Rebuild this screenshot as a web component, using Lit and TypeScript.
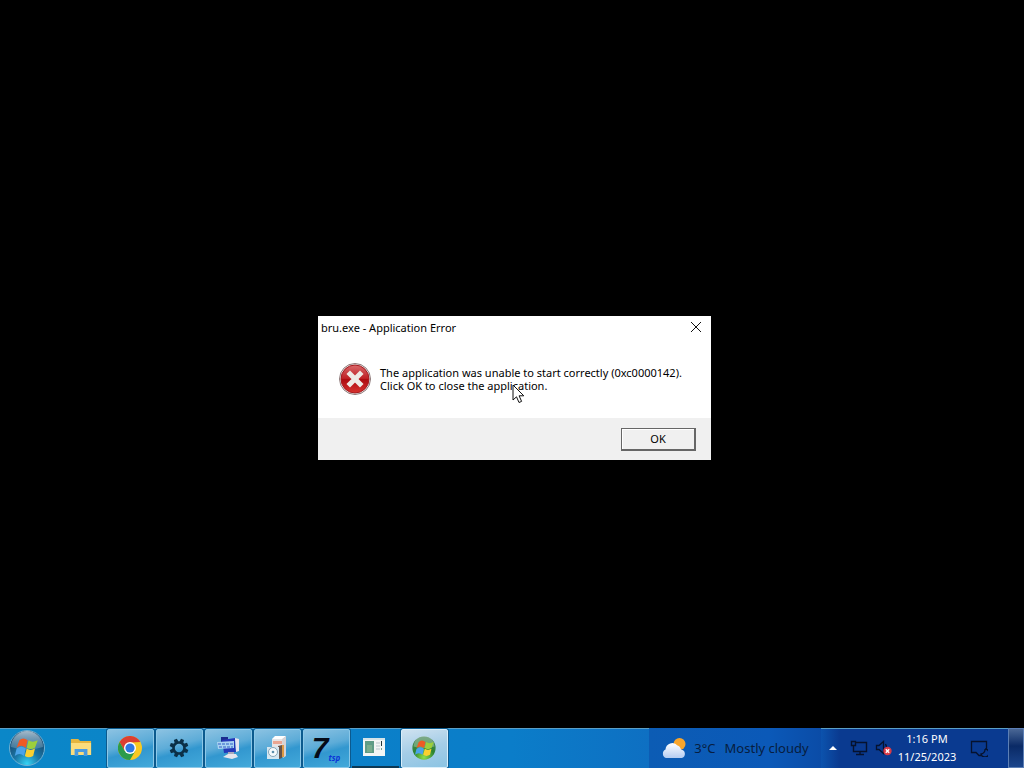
import { LitElement, html, css, svg } from 'lit';
import { customElement, state } from 'lit/decorators.js';
import { classMap } from 'lit/directives/class-map.js';

const flag = svg`
  <path d="M8 9 Q12 5 17 9 L15 17 Q10 13 5 17Z" fill="#ee5a24"/>
  <path d="M18 9 Q22 12 28 9 L25 17 Q20 20 16 17Z" fill="#9ccf3c"/>
  <path d="M5 18 Q10 14 15 18 L13 26 Q8 22 3 26Z" fill="#4ba3e8"/>
  <path d="M16 18 Q20 21 25 18 L23 26 Q18 29 14 26Z" fill="#fbd02f"/>`;

const startIcon = html`<svg width="38" height="38" viewBox="0 0 38 38" aria-hidden="true">
  <defs>
    <radialGradient id="orb" cx="50%" cy="95%" r="90%">
      <stop offset="0" stop-color="#35d3f4"/><stop offset=".4" stop-color="#1a78a8"/><stop offset="1" stop-color="#17395c"/>
    </radialGradient>
    <linearGradient id="gloss" x1="0" y1="0" x2="0" y2="1">
      <stop offset="0" stop-color="#d5e7f1" stop-opacity=".75"/><stop offset="1" stop-color="#8fb9d0" stop-opacity=".3"/>
    </linearGradient>
  </defs>
  <circle cx="19" cy="19" r="17.5" fill="url(#orb)" stroke="#6fb1d4"/>
  <path d="M3 18 A16 16 0 0 1 35 18 Q19 23 3 18Z" fill="url(#gloss)"/>
  <g transform="translate(4 3) scale(.92)">${flag}</g>
</svg>`;

const folderIcon = html`<svg width="22" height="20" viewBox="0 0 24 20" preserveAspectRatio="none" aria-hidden="true">
  <path d="M1 1h8l2 2h12v14H1z" fill="#e5b53f"/>
  <path d="M1 5h22v12H1z" fill="#fbdc7c"/>
  <path d="M5 11h14v7h-4v-4H9v4H5z" fill="#4a9be0"/>
</svg>`;

const chromeIcon = html`<svg width="24" height="24" viewBox="0 0 24 24" aria-hidden="true">
  <circle cx="12" cy="12" r="12" fill="#f9c921"/>
  <path d="M1.6 6 A12 12 0 0 1 22.4 6 L12 6.4 L6.8 15Z" fill="#dc3f31"/>
  <path d="M1.6 6 A12 12 0 0 0 12 24 L17.2 15 L6.8 15Z" fill="#2c9b4b"/>
  <circle cx="12" cy="12" r="6" fill="#fff"/>
  <circle cx="12" cy="12" r="4.6" fill="#2f78e4"/>
</svg>`;

const gearIcon = html`<svg width="20" height="20" viewBox="0 0 20 20" fill="none" aria-hidden="true">
  <circle cx="10" cy="10" r="5.5" stroke="#0b3047" stroke-width="2.6"/>
  ${[0, 45, 90, 135, 180, 225, 270, 315].map(a => svg`<path d="M7.9 4 L8.4 .6 H11.6 L12.1 4Z" fill="#0b3047" transform="rotate(${a + 22} 10 10)"/>`)}
</svg>`;

const monitorIcon = html`<svg width="24" height="24" viewBox="0 0 24 24" aria-hidden="true">
  <path d="M5 1 L12 1 V6 H5z" fill="#1a2c8e"/>
  <path d="M6 4 L19 2 L20 16 L8 17Z" fill="#2337b8"/>
  <path d="M19 2 L23 3 L23 15 L20 16Z" fill="#e6e4f0"/>
  <path d="M1 6 L18 5 V12 L2 13Z" fill="#a9d2f2"/>
  <path d="M2 8h15M3 11h14" stroke="#315fc5" stroke-width="1.2" stroke-dasharray="3 1"/>
  <path d="M12 16h6v4h-6z" fill="#aaa9ba"/>
  <path d="M7 21 L12 18 H20 L22 21 L16 23Z" fill="#e4e5ed"/>
</svg>`;

const installerIcon = html`<svg width="24" height="24" viewBox="0 0 24 24" aria-hidden="true">
  <path d="M7 3 L18 2 V21 L7 22Z" fill="#e7e4e5"/>
  <path d="M7 3 L10 0 H21 L18 3Z" fill="#fff"/>
  <path d="M17 3 L21 0 V20 L18 22Z" fill="#d8d2d4"/>
  <path d="M8 5h9v3H8z" fill="#eba692"/>
  <path d="M13 10 L17 9 V22 L14 23Z" fill="#65534c"/>
  <path d="M17 9h2v12h-2z" fill="#dc9a45"/>
  <path d="M2 11h12v12H2z" fill="#d5e6f0"/>
  <circle cx="8" cy="16" r="4.5" fill="#f6fafc" stroke="#87a6b8"/>
  <circle cx="8" cy="16" r="1.3" fill="#5c8fac"/>
</svg>`;

const windowIcon = html`<svg width="22" height="20" viewBox="0 0 22 20" aria-hidden="true">
  <path d="M0 1h22v18H0z" fill="#f3f6f5"/>
  <path d="M0 1h22v2H0z" fill="#d4e4e9"/>
  <path d="M2 4h9v12H2z" fill="#5f9c86"/>
  <path d="M4 8h5v7H4z" fill="#79ad8d"/>
  <path d="M13 6h4M13 9h4M13 12h4" stroke="#b9c7cb"/>
  <path d="M18 4h1v5h-1z" fill="#27363a"/>
  <path d="M18 11h1v2h-1z" fill="#7ca090"/>
</svg>`;

const greenOrbIcon = html`<svg width="24" height="24" viewBox="0 0 32 32" aria-hidden="true">
  <defs><radialGradient id="green" cx="50%" cy="90%" r="90%">
    <stop offset="0" stop-color="#8fe04a"/><stop offset=".5" stop-color="#2b8430"/><stop offset="1" stop-color="#4e8462"/>
  </radialGradient></defs>
  <circle cx="16" cy="16" r="15.5" fill="url(#green)"/>
  <path d="M2 14 A14 14 0 0 1 30 14 Q16 18 2 14Z" fill="#d4ecd5" opacity=".35"/>
  <g transform="translate(1 -1)">${flag}</g>
</svg>`;

const weatherIcon = html`<svg width="26" height="22" viewBox="0 0 26 22" aria-hidden="true">
  <defs><linearGradient id="cloud" x1="0" y1="0" x2="0" y2="1"><stop offset="0" stop-color="#fff"/><stop offset="1" stop-color="#b5cdf2"/></linearGradient></defs>
  <circle cx="18.5" cy="7" r="6" fill="#f9a52b"/>
  <path d="M5 21 A4.6 4.6 0 0 1 4.5 12.5 A6.8 6.8 0 0 1 16.5 8.5 Q19 9 20 12.5 A4.4 4.4 0 0 1 21 21Z" fill="url(#cloud)"/>
</svg>`;

const errorIcon = html`<svg width="32" height="32" viewBox="0 0 32 32" aria-hidden="true">
  <defs><linearGradient id="red" x1="0" y1="0" x2="0" y2="1"><stop offset="0" stop-color="#d9686a"/><stop offset=".48" stop-color="#bf2226"/><stop offset=".5" stop-color="#ac0b10"/><stop offset="1" stop-color="#d7332f"/></linearGradient></defs>
  <circle cx="16" cy="16" r="15.5" fill="#eee" stroke="#8d7777"/>
  <circle cx="16" cy="16" r="14" fill="url(#red)" stroke="#a51a1e"/>
  <path d="M11 11 L21 21 M21 11 L11 21" stroke="#eeebe6" stroke-width="5" stroke-linecap="square" />
</svg>`;

const pointer = html`<svg class="pointer" width="13" height="20" viewBox="0 0 13 20" aria-hidden="true">
  <path d="M1 1 V16 L4.5 12.8 L7 18.5 L9.6 17.4 L7.1 11.8 H11.8Z" fill="#fff" stroke="#111"/>
</svg>`;

interface Task { name: string; icon: unknown; kind: string; }

const tasks: Task[] = [
  { name: 'Google Chrome', icon: chromeIcon, kind: 'glass' },
  { name: 'Settings', icon: gearIcon, kind: 'glass' },
  { name: 'Remote display', icon: monitorIcon, kind: 'glass' },
  { name: 'Installer', icon: installerIcon, kind: 'glass' },
  { name: '7tsp', icon: html`<span class="seven">7</span><span class="tsp">tsp</span>`, kind: 'glass' },
  { name: 'Console window', icon: windowIcon, kind: 'plain' },
  { name: 'Application Error', icon: greenOrbIcon, kind: 'active' },
];

@customElement('error-dialog')
class ErrorDialog extends LitElement {
  static styles = css`
    :host { display: block; background: #fff; color: #000; font: 11px/13px "Noto Sans", sans-serif; }
    header { display: flex; justify-content: space-between; align-items: center; height: 24px; padding-left: 3px; line-height: 16px; }
    h1 { margin: 0; font: inherit; }
    button { font: inherit; color: inherit; }
    .close { display: grid; place-items: center; width: 31px; height: 24px; padding: 0 0 2px; border: 0; background: none; }
    .content { display: flex; align-items: center; gap: 9px; height: 78px; padding: 0 21px; }
    .content p { margin: 0; white-space: pre-line; }
    footer { display: flex; justify-content: flex-end; padding: 10px 15px 9px; background: #f0f0f0; }
    .ok { width: 75px; height: 23px; padding: 0 0 2px; background: #f0f0f0; border: 1px solid #666; border-width: 1px 2px 2px 1px; box-shadow: inset 1px 1px #fff; }
    svg { display: block; flex: none; }
  `;

  private dismiss() { this.dispatchEvent(new CustomEvent('dismiss')); }

  render() {
    return html`
      <header>
        <h1>bru.exe - Application Error</h1>
        <button class="close" aria-label="Close" @click=${this.dismiss}>
          <svg width="12" height="12" viewBox="0 0 12 12"><path d="M1 1 L11 11 M11 1 L1 11" stroke="#111" fill="none"/></svg>
        </button>
      </header>
      <div class="content">${errorIcon}<p>The application was unable to start correctly (0xc0000142).
Click OK to close the application.</p></div>
      <footer><button class="ok" @click=${this.dismiss}>OK</button></footer>`;
  }
}

@customElement('task-bar')
class TaskBar extends LitElement {
  static styles = css`
    :host { display: flex; height: 40px; box-shadow: inset 0 1px #5a9fc8; background: linear-gradient(90deg, #0b87c8 0%, #0b7dc9 50%, #0e6fc2 64%, #0c55b0 80%, #0a3a90 82%, #0a3a90 100%); font: 11px/18px "Noto Sans", sans-serif; color: #fff; }
    button { display: flex; align-items: center; justify-content: center; padding: 0; border: 0; background: none; font: inherit; color: inherit; }
    svg { display: block; flex: none; }
    .start { width: 54px; }
    .pinned { width: 53px; }
    .tasks { display: flex; gap: 2px; flex: 1; padding-top: 1px; }
    .task { width: 47px; box-sizing: border-box; padding: 0 1px 2px 0; }
    .glass { border: 1px solid #8cc8e8; border-radius: 2px; background: linear-gradient(165deg, #8bc2e2 0%, #5dacd8 42%, #3297cf 58%, #43a9da 100%); box-shadow: 0 0 0 1px #0c5a8e; }
    .plain { padding-right: 3px; border-bottom: 2px solid #0d3853; }
    .active { border: 1px solid #d9eefa; border-radius: 2px; background: linear-gradient(165deg, #cfe2f0 0%, #a5cde7 50%, #8cc4e3 100%); box-shadow: 0 0 0 1px #0c5a8e; }
    .seven { color: #050b18; font: italic bold 30px/30px "Liberation Sans", sans-serif; }
    .tsp { align-self: flex-end; color: #0a35d8; font: italic bold 8px/14px "Open Sans", sans-serif; }
    .weather { gap: 7px; width: 172px; background: linear-gradient(90deg, #0c5cb4, #0b59b8 70%, #0b4ca7); color: #071d40; font-size: 13px; }
    .weather span + span { margin-left: 2px; }
    .tray { display: flex; align-items: stretch; }
    .more { width: 24px; }
    .network { width: 27px; }
    .sound { width: 22px; }
    .clock { width: 66px; flex-direction: column; font-size: 11px; }
    .notes { width: 38px; margin-right: 10px; }
    .show { width: 16px; box-sizing: border-box; border: 1px solid #5c7fb5; background: linear-gradient(#4a6795, #0a2a66 45%, #1b458c); }
  `;

  render() {
    return html`
      <button class="start" aria-label="Start">${startIcon}</button>
      <button class="pinned" aria-label="File Explorer">${folderIcon}</button>
      <div class="tasks">${tasks.map(t => html`
        <button class=${classMap({ task: true, [t.kind]: true })} aria-label=${t.name}>${t.icon}</button>`)}
      </div>
      <button class="weather">${weatherIcon}<span>3°C</span><span>Mostly cloudy</span></button>
      <div class="tray">
        <button class="more" aria-label="Show hidden icons"><svg width="8" height="4" viewBox="0 0 8 4"><path d="M0 4 L4 0 L8 4Z" fill="#fff"/></svg></button>
        <button class="network" aria-label="Network"><svg width="18" height="16" viewBox="0 0 18 16" fill="none" stroke="#06122e">
          <path d="M5 2.5 H16.5 V11.5 H3.5 V7 M10 12 V14.5 M6 14.5 H14 M1.5 1.5 H5.5 V5.5 H1.5Z M3.5 5 V8" stroke-width="1.4"/></svg></button>
        <button class="sound" aria-label="Volume muted"><svg width="18" height="16" viewBox="0 0 18 16">
          <path d="M2.5 5.5 H5 L9.5 1.5 V13.5 L5 9.5 H2.5Z M11.5 4 Q13.5 7 11.5 10" fill="none" stroke="#06122e" stroke-width="1.3"/>
          <circle cx="13.5" cy="11" r="4.2" fill="#d83a46"/><path d="M11.8 9.3 L15.2 12.7 M15.2 9.3 L11.8 12.7" stroke="#fff" stroke-width="1.4"/></svg></button>
        <button class="clock"><span>1:16 PM</span><span>11/25/2023</span></button>
        <button class="notes" aria-label="Notifications"><svg width="18" height="18" viewBox="0 0 18 18" fill="none" stroke="#06122e" stroke-width="1.3">
          <path d="M16.5 10 V2.5 H1.5 V13.5 H6 L9 16.5 H11 M15 10 A4 4 0 1 1 11 15 A4.5 4.5 0 0 0 15 10"/></svg></button>
        <button class="show" aria-label="Show desktop"></button>
      </div>`;
  }
}

@customElement('app-root')
class AppRoot extends LitElement {
  static styles = css`
    :host { display: flex; flex-direction: column; height: 100vh; background: #000; overflow: hidden; }
    .desktop { position: relative; flex: 1; }
    .window { position: absolute; left: 318px; top: 316px; width: 393px; }
    .pointer { position: absolute; left: 512px; top: 384px; }
  `;

  @state() private open = true;

  render() {
    return html`
      <main class="desktop">
        ${this.open ? html`<error-dialog class="window" role="alertdialog" aria-label="Application Error" @dismiss=${() => { this.open = false; }}></error-dialog>` : null}
        ${pointer}
      </main>
      <task-bar></task-bar>`;
  }
}
